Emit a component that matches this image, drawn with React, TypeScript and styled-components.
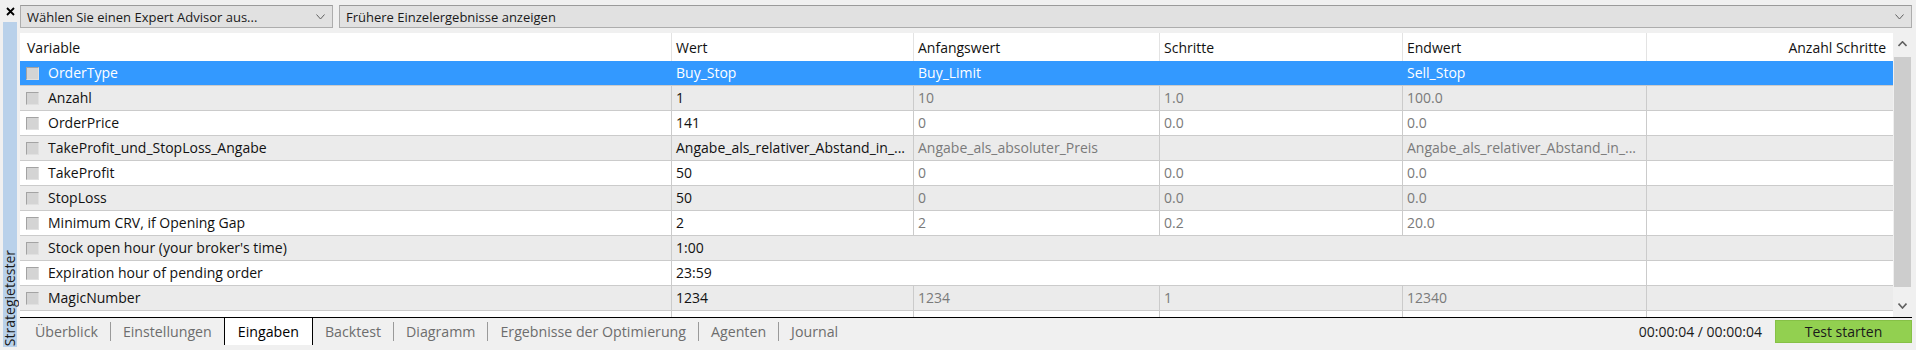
import React from "react";
import styled, { createGlobalStyle } from "styled-components";

const Global = createGlobalStyle`
  html, body { margin: 0; padding: 0; background: #f0f0f0; }
  body { font-family: "Open Sans", "Noto Sans", "DejaVu Sans", sans-serif; }
  * { box-sizing: border-box; }
`;

const Window = styled.div`
  width: 1916px;
  height: 350px;
  display: flex;
  background: #f0f0f0;
  overflow: hidden;
  color: #1a1a1a;
`;

const SideStrip = styled.div`
  width: 20px;
  display: flex;
  flex-direction: column;
  padding: 0 3px 3px 3px;
`;

const CloseButton = styled.div`
  height: 22px;
  display: flex;
  align-items: center;
  justify-content: center;
`;

const VerticalTab = styled.div`
  flex: 1;
  background: #b9d1ea;
  display: flex;
  align-items: flex-end;
  justify-content: center;
  padding-bottom: 1px;
`;

const VerticalLabel = styled.span`
  writing-mode: vertical-rl;
  transform: rotate(180deg);
  font-size: 14px;
  line-height: 14px;
  color: #1a1a1a;
  white-space: nowrap;
`;

const Main = styled.div`
  flex: 1;
  display: flex;
  flex-direction: column;
  padding: 5px 4px 0 0;
  min-width: 0;
`;

const Toolbar = styled.div`
  display: flex;
  gap: 6px;
  height: 23px;
`;

const Dropdown = styled.div<{ $width?: number }>`
  ${(p) => (p.$width ? `width: ${p.$width}px;` : "flex: 1;")}
  height: 23px;
  background: #e1e1e1;
  border: 1px solid #adadad;
  border-top-color: #9a9a9a;
  display: flex;
  align-items: center;
  justify-content: space-between;
  padding: 0 7px 0 6px;
  font-size: 13px;
  color: #1a1a1a;
  white-space: nowrap;
`;

const TableArea = styled.div`
  margin-top: 5px;
  height: 284px;
  display: flex;
`;

const Table = styled.div`
  flex: 1;
  background: #ffffff;
  overflow: hidden;
  min-width: 0;
`;

const COLS = "652px 242px 246px 243px 244px 1fr";

const HeaderRow = styled.div`
  display: grid;
  grid-template-columns: ${COLS};
  height: 28px;
  background: #ffffff;
`;

const HeaderCell = styled.div<{ $right?: boolean }>`
  border-right: 1px solid #e3e3e3;
  padding: 0 7px 0 ${(p) => (p.$right ? "0" : "4px")};
  display: flex;
  align-items: center;
  justify-content: ${(p) => (p.$right ? "flex-end" : "flex-start")};
  font-size: 14px;
  color: #111111;
  white-space: nowrap;
  &:first-child { padding-left: 7px; }
  &:last-child { border-right: none; }
`;

type Variant = "selected" | "odd" | "even";

const Row = styled.div<{ $variant: Variant }>`
  display: grid;
  grid-template-columns: ${COLS};
  height: 25px;
  border-bottom: 1px solid #cbcbcb;
  background: ${(p) =>
    p.$variant === "selected" ? "#3399ff" : p.$variant === "odd" ? "#ebebeb" : "#ffffff"};
  color: ${(p) => (p.$variant === "selected" ? "#ffffff" : "#111111")};
`;

const Cell = styled.div<{ $muted?: boolean; $span?: number; $sel?: boolean }>`
  ${(p) => (p.$span ? `grid-column: span ${p.$span};` : "")}
  border-right: 1px solid ${(p) => (p.$sel ? "#3399ff" : "#cbcbcb")};
  padding-left: 4px;
  font-size: 14px;
  line-height: 24px;
  white-space: nowrap;
  overflow: hidden;
  color: ${(p) => (p.$sel ? "#ffffff" : p.$muted ? "#7a7a7a" : "inherit")};
  &:last-child { border-right: none; }
`;

const NameCell = styled(Cell)`
  display: flex;
  align-items: center;
  gap: 9px;
  padding-left: 6px;
`;

const CheckBox = styled.span`
  width: 13px;
  height: 13px;
  flex: none;
  background: #d4d4d4;
  border: 1px solid;
  border-color: #a3a3a3 #e0e0e0 #e0e0e0 #a3a3a3;
`;

const Scrollbar = styled.div`
  width: 19px;
  background: #f0f0f0;
  display: flex;
  flex-direction: column;
`;

const ScrollButton = styled.div<{ $h: number }>`
  height: ${(p) => p.$h}px;
  display: flex;
  align-items: center;
  justify-content: center;
`;

const Thumb = styled.div`
  margin: 2px 1px 0 1px;
  height: 230px;
  background: #cdcdcd;
`;

const ScrollSpacer = styled.div`
  flex: 1;
`;

const TabBar = styled.div`
  flex: 1;
  border-top: 1px solid #000000;
  display: flex;
  align-items: flex-start;
  padding-left: 3px;
`;

const Tab = styled.div<{ $active?: boolean }>`
  height: 27px;
  padding: 0 ${(p) => (p.$active ? "13px" : "12px")};
  display: flex;
  align-items: center;
  font-size: 14.2px;
  white-space: nowrap;
  color: ${(p) => (p.$active ? "#000000" : "#6d6d6d")};
  background: ${(p) => (p.$active ? "#ffffff" : "transparent")};
  border-left: ${(p) => (p.$active ? "1px solid #000" : "none")};
  border-right: ${(p) => (p.$active ? "1px solid #000" : "none")};
  margin-top: ${(p) => (p.$active ? "-1px" : "0")};
  ${(p) => (p.$active ? "border-top: 1px solid #000; height: 28px;" : "")}
`;

const TabSep = styled.div`
  width: 1px;
  height: 19px;
  margin-top: 4px;
  background: #9a9a9a;
`;

const TabFiller = styled.div`
  flex: 1;
`;

const Timer = styled.div`
  height: 27px;
  display: flex;
  align-items: center;
  font-size: 14px;
  color: #1a1a1a;
  margin-right: 13px;
`;

const StartButton = styled.div`
  margin-top: 2px;
  width: 137px;
  height: 23px;
  background: #92d050;
  border: 1px solid #86c146;
  display: flex;
  align-items: center;
  justify-content: center;
  font-size: 14px;
  color: #1a1a1a;
`;

const Chevron = ({ dir, color = "#606060", w = 9, sw = 1 }: { dir: "up" | "down"; color?: string; w?: number; sw?: number }) => (
  <svg width={w} height={Math.ceil(w / 2) + 1} viewBox={`0 0 ${w} ${Math.ceil(w / 2) + 1}`}>
    {dir === "down" ? (
      <polyline points={`0.5,0.5 ${w / 2},${Math.ceil(w / 2)} ${w - 0.5},0.5`} fill="none" stroke={color} strokeWidth={sw} />
    ) : (
      <polyline points={`0.5,${Math.ceil(w / 2)} ${w / 2},0.8 ${w - 0.5},${Math.ceil(w / 2)}`} fill="none" stroke={color} strokeWidth={sw} />
    )}
  </svg>
);

type Param = {
  name: string;
  value: string;
  start?: string;
  step?: string;
  stop?: string;
  span?: boolean;
};

const params: Param[] = [
  { name: "OrderType", value: "Buy_Stop", start: "Buy_Limit", step: "", stop: "Sell_Stop" },
  { name: "Anzahl", value: "1", start: "10", step: "1.0", stop: "100.0" },
  { name: "OrderPrice", value: "141", start: "0", step: "0.0", stop: "0.0" },
  {
    name: "TakeProfit_und_StopLoss_Angabe",
    value: "Angabe_als_relativer_Abstand_in_...",
    start: "Angabe_als_absoluter_Preis",
    step: "",
    stop: "Angabe_als_relativer_Abstand_in_...",
  },
  { name: "TakeProfit", value: "50", start: "0", step: "0.0", stop: "0.0" },
  { name: "StopLoss", value: "50", start: "0", step: "0.0", stop: "0.0" },
  { name: "Minimum CRV, if Opening Gap", value: "2", start: "2", step: "0.2", stop: "20.0" },
  { name: "Stock open hour (your broker's time)", value: "1:00", span: true },
  { name: "Expiration hour of pending order", value: "23:59", span: true },
  { name: "MagicNumber", value: "1234", start: "1234", step: "1", stop: "12340" },
];

const tabs = [
  "Überblick",
  "Einstellungen",
  "Eingaben",
  "Backtest",
  "Diagramm",
  "Ergebnisse der Optimierung",
  "Agenten",
  "Journal",
];
const ACTIVE = 2;

export default function App() {
  return (
    <>
      <Global />
      <Window>
        <SideStrip>
          <CloseButton>
            <svg width="9" height="9" viewBox="0 0 9 9">
              <path d="M1 1 L8 8 M8 1 L1 8" stroke="#000" strokeWidth="1.8" />
            </svg>
          </CloseButton>
          <VerticalTab>
            <VerticalLabel>Strategietester</VerticalLabel>
          </VerticalTab>
        </SideStrip>
        <Main>
          <Toolbar>
            <Dropdown $width={313}>
              <span>Wählen Sie einen Expert Advisor aus...</span>
              <Chevron dir="down" />
            </Dropdown>
            <Dropdown>
              <span>Frühere Einzelergebnisse anzeigen</span>
              <Chevron dir="down" />
            </Dropdown>
          </Toolbar>
          <TableArea>
            <Table>
              <HeaderRow>
                <HeaderCell>Variable</HeaderCell>
                <HeaderCell>Wert</HeaderCell>
                <HeaderCell>Anfangswert</HeaderCell>
                <HeaderCell>Schritte</HeaderCell>
                <HeaderCell>Endwert</HeaderCell>
                <HeaderCell $right>Anzahl Schritte</HeaderCell>
              </HeaderRow>
              {params.map((p, i) => {
                const variant: Variant = i === 0 ? "selected" : i % 2 === 1 ? "odd" : "even";
                const sel = variant === "selected";
                return (
                  <Row key={p.name} $variant={variant}>
                    <NameCell $sel={sel}>
                      <CheckBox />
                      <span>{p.name}</span>
                    </NameCell>
                    {p.span ? (
                      <Cell $span={4}>{p.value}</Cell>
                    ) : (
                      <>
                        <Cell $sel={sel}>{p.value}</Cell>
                        <Cell $sel={sel} $muted>{p.start}</Cell>
                        <Cell $sel={sel} $muted>{p.step}</Cell>
                        <Cell $sel={sel} $muted>{p.stop}</Cell>
                      </>
                    )}
                    <Cell $sel={sel}></Cell>
                  </Row>
                );
              })}
              <Row $variant="even">
                <Cell />
                <Cell />
                <Cell />
                <Cell />
                <Cell />
                <Cell />
              </Row>
            </Table>
            <Scrollbar>
              <ScrollButton $h={22}>
                <Chevron dir="up" w={9} sw={1.6} />
              </ScrollButton>
              <Thumb />
              <ScrollSpacer />
              <ScrollButton $h={23}>
                <Chevron dir="down" w={9} sw={1.6} />
              </ScrollButton>
            </Scrollbar>
          </TableArea>
          <TabBar>
            {tabs.map((t, i) => (
              <React.Fragment key={t}>
                {i > 0 && i !== ACTIVE && i !== ACTIVE + 1 && <TabSep />}
                <Tab $active={i === ACTIVE}>{t}</Tab>
              </React.Fragment>
            ))}
            <TabFiller />
            <Timer>00:00:04 / 00:00:04</Timer>
            <StartButton>Test starten</StartButton>
          </TabBar>
        </Main>
      </Window>
    </>
  );
}
